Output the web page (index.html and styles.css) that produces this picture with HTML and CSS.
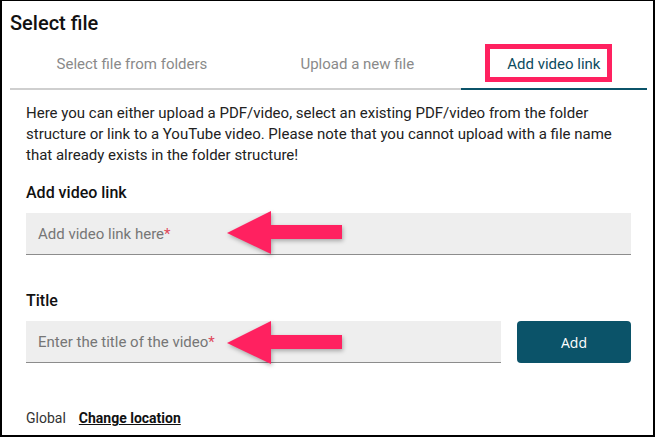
FILE: index.html
```html
<!DOCTYPE html>
<html lang="en">
<head>
  <meta charset="UTF-8" />
  <meta name="viewport" content="width=device-width, initial-scale=1.0"/>
  <title>Select file</title>
  <link rel="stylesheet" href="styles.css">
</head>
<body>
  <div class="dialog">
    <h2 class="dialog-title">Select file</h2>

    <!-- tabs -->
    <div class="tabs">
      <div class="tab">Select file from folders</div>
      <div class="tab">Upload a new file</div>
      <div class="tab active"><span class="tab-label">Add video link</span></div>
    </div>

    <div class="content">
      <p class="intro">Here you can either upload a PDF/video, select an existing PDF/video from the folder structure or link to a YouTube video. Please note that you cannot upload with a file name that already exists in the folder structure!</p>

      <label class="field-label">Add video link</label>
      <div class="field">
        <span class="placeholder">Add video link here<span class="req">*</span></span>
        <svg class="arrow" width="124" height="50" viewBox="0 0 124 50">
          <polygon points="2,24 46,2 46,16 117,16 117,30 46,30 46,45" fill="#ff2160" />
        </svg>
      </div>

      <label class="field-label title-label">Title</label>
      <div class="field-row">
        <div class="field grow">
          <span class="placeholder">Enter the title of the video<span class="req">*</span></span>
          <svg class="arrow arrow-low" width="124" height="50" viewBox="0 0 124 50">
            <polygon points="2,24 46,2 46,16 117,16 117,30 46,30 46,45" fill="#ff2160" />
          </svg>
        </div>
        <button class="add-btn">Add</button>
      </div>

      <div class="location">
        <span>Global</span>
        <a href="#" class="change-link">Change location</a>
      </div>
    </div>
  </div>
</body>
</html>
```

FILE: styles.css
```css
* {
  box-sizing: border-box;
}

body {
  margin: 0;
  font-family: Roboto, "Liberation Sans", sans-serif;
  background: white;
  color: #222;
}

.dialog {
  width: 655px;
  height: 437px;
  border: 2px solid #000;
  border-top-width: 1px;
  padding: 10px 6px 0 8px;
  overflow: hidden;
}

.dialog-title {
  margin: 0;
  font-size: 20px;
  line-height: 24px;
  font-weight: 500;
  color: #111;
}

.tabs {
  display: flex;
  margin-top: 5px;
  border-bottom: 2px solid #cfcfcf;
}

.tab {
  flex: 1 1 auto;
  text-align: center;
  font-size: 15px;
  line-height: 20px;
  padding: 14px 0;
  color: #8a8a8a;
  white-space: nowrap;
  margin-bottom: -2px;
  border-bottom: 2px solid transparent;
}

.tab.active {
  color: #0d4b60;
  border-bottom-color: #0b5369;
}

.tab-label {
  position: relative;
}

/* pink highlight box around the active tab */
.tab-label::before {
  content: "";
  position: absolute;
  top: -11px;
  bottom: -9px;
  left: -22px;
  right: -12px;
  border: 5px solid #ff2160;
}

.content {
  padding: 0 16px;
}

.intro {
  margin: 13px 0 0;
  font-size: 15px;
  line-height: 21px;
  color: #222;
}

.field-label {
  display: block;
  margin-top: 17px;
  font-size: 16px;
  line-height: 20px;
  font-weight: 500;
  color: #111;
}

.title-label {
  margin-top: 36px;
}

.field {
  position: relative;
  height: 42px;
  margin-top: 10px;
  background: #eeeeee;
  border-bottom: 1px solid #8c8c8c;
  display: flex;
  align-items: center;
  padding-left: 12px;
}

.placeholder {
  font-size: 15px;
  color: #767676;
}

.req {
  color: #e0475b;
}

.arrow {
  position: absolute;
  left: 199px;
  top: -4px;
  filter: drop-shadow(1px 2px 2px rgba(0, 0, 0, 0.3));
}

.arrow-low {
  top: -2px;
}

.field-row {
  display: flex;
  align-items: flex-end;
  gap: 16px;
}

.grow {
  flex: 1;
}

.add-btn {
  width: 114px;
  height: 42px;
  border: none;
  border-radius: 4px;
  background: #0b5369;
  color: white;
  font-family: "Open Sans", sans-serif;
  font-size: 14px;
  cursor: pointer;
}

.location {
  display: flex;
  gap: 13px;
  margin-top: 45px;
  font-size: 14px;
  line-height: 20px;
  color: #333;
}

.change-link {
  color: #111;
  font-weight: 700;
  text-decoration: underline;
}
```
